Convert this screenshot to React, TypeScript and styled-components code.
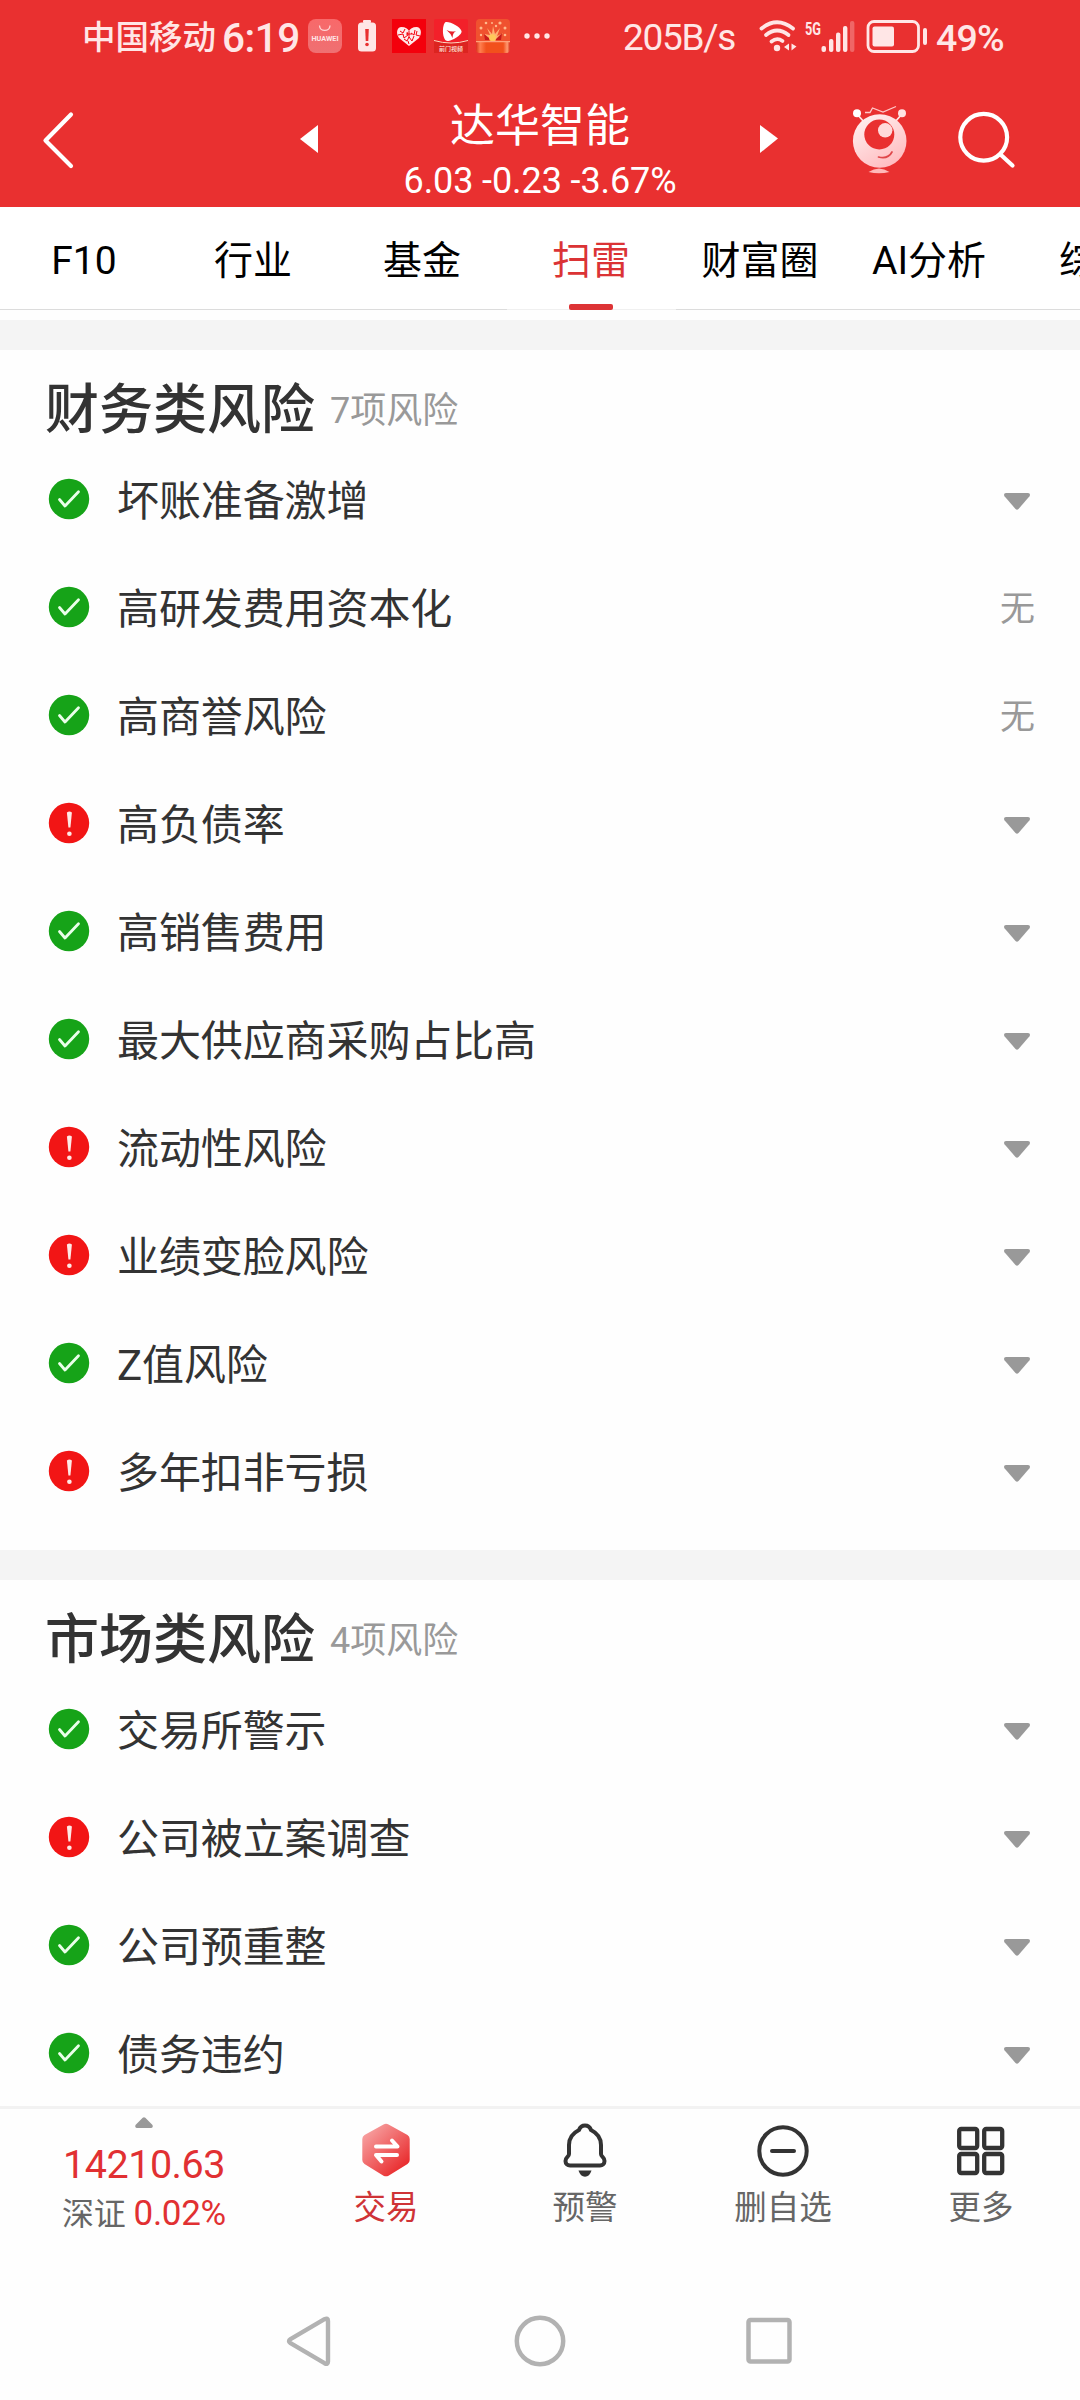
import React from 'react';
import styled, { createGlobalStyle } from 'styled-components';

const GlobalStyle = createGlobalStyle`
  * { box-sizing: border-box; }
  body {
    margin: 0;
    background: #fff;
    font-family: Roboto, "Noto Sans CJK SC", sans-serif;
    color: #333;
  }
  svg { display: block; flex: none; overflow: visible; }
`;

const Screen = styled.div`
  width: 1080px;
  height: 2400px;
  display: flex;
  flex-direction: column;
  overflow: hidden;
  background: #fefefe;
`;

/* ---------- status bar ---------- */

const StatusBar = styled.div`
  flex: none;
  height: 75px;
  padding: 0 0 3px 82px;
  display: flex;
  align-items: center;
  background: #e93030;
  color: #ffe6e6;
  white-space: nowrap;
`;

const StatusText = styled.span<{ $w: number; $size: number; $weight?: number; $gap?: number; $track?: number }>`
  flex: none;
  width: ${p => p.$w}px;
  margin-left: ${p => p.$gap ?? 0}px;
  padding-top: 3px;
  font-size: ${p => p.$size}px;
  font-weight: ${p => p.$weight ?? 400};
  letter-spacing: ${p => p.$track ?? 0}px;
  line-height: 50px;
`;

const StatusIcon = styled.span<{ $gap: number }>`
  flex: none;
  margin-left: ${p => p.$gap}px;
`;

/* ---------- title bar ---------- */

const TitleBar = styled.header`
  flex: none;
  height: 132px;
  padding-left: 41px;
  display: flex;
  align-items: center;
  background: #e93030;
  color: #fff;
`;

const IconSlot = styled.span<{ $gap?: number; $raise?: number }>`
  flex: none;
  margin-left: ${p => p.$gap ?? 0}px;
  padding-bottom: ${p => p.$raise ?? 0}px;
`;

const Stock = styled.div`
  flex: none;
  width: 442px;
  height: 132px;
  padding: 22px 0 0 2px;
  display: flex;
  flex-direction: column;
  align-items: center;
`;

const StockName = styled.div`
  font-size: 45px;
  line-height: 60px;
`;

const StockQuote = styled.div`
  font-size: 36px;
  line-height: 48px;
  letter-spacing: -0.1px;
  white-space: pre;
`;

/* ---------- tabs ---------- */

const Tabs = styled.nav`
  flex: none;
  height: 103px;
  display: flex;
  overflow: hidden;
  background: #fff;
`;

const Tab = styled.div<{ $active?: boolean }>`
  flex: none;
  width: 169px;
  display: flex;
  flex-direction: column;
  align-items: center;
  justify-content: space-between;
  font-size: 39px;
  line-height: 56px;
  padding: 26px 1px 0 0;
  white-space: nowrap;
  color: ${p => (p.$active ? '#db3335' : '#000')};
  border-bottom: 1px solid ${p => (p.$active ? '#f0f0f0' : '#dcdcdc')};
`;

const Indicator = styled.span`
  width: 44px;
  height: 6px;
  margin-bottom: -1px;
  border-radius: 2px;
  background: #dd3335;
`;

/* ---------- risk list ---------- */

const Content = styled.main`
  flex: none;
  height: 1796px;
  padding-top: 10px;
  overflow: hidden;
`;

const Section = styled.section`
  height: 1230px;
  border-top: 30px solid #f4f4f4;
`;

const SectionHead = styled.div`
  height: 96px;
  padding: 25px 45px 0;
  display: flex;
  align-items: center;
  gap: 15px;
`;

const SectionTitle = styled.h2`
  margin: 0;
  font-size: 54px;
  line-height: 76px;
  font-weight: 500;
`;

const SectionCount = styled.span`
  font-size: 36px;
  line-height: 50px;
  padding-top: 1px;
  color: #999;
`;

const Row = styled.div`
  height: 108px;
  padding: 0 45px 0 48px;
  display: flex;
  align-items: center;
`;

const RowName = styled.span`
  flex: 1;
  margin-left: 27px;
  padding-top: 4px;
  font-size: 42px;
  line-height: 60px;
  letter-spacing: -0.1px;
`;

const RowNone = styled.span`
  font-size: 35px;
  line-height: 50px;
  padding-top: 3px;
  color: #999;
`;

const Toggle = styled.span`
  margin: 3px 5px 0 0;
`;

/* ---------- bottom bar ---------- */

const BottomBar = styled.footer`
  flex: none;
  height: 174px;
  display: flex;
  border-top: 3px solid #f2f2f2;
  background: #fefefe;
`;

const IndexCell = styled.div`
  width: 288px;
  padding-top: 8px;
  display: flex;
  flex-direction: column;
  align-items: center;
  color: #e13032;
`;

const IndexValue = styled.div`
  margin-top: 12px;
  font-size: 39.5px;
  line-height: 50px;
  letter-spacing: -0.5px;
`;

const IndexChange = styled.div`
  font-size: 35px;
  line-height: 48px;
  letter-spacing: -0.3px;
  white-space: nowrap;
`;

const IndexName = styled.span`
  margin-right: 8px;
  font-size: 32px;
  color: #666;
`;

const Action = styled.div<{ $accent?: boolean }>`
  width: 198px;
  padding-top: 12px;
  display: flex;
  flex-direction: column;
  align-items: center;
  gap: 5px;
  font-size: 32.5px;
  line-height: 48px;
  color: ${p => (p.$accent ? '#cf3336' : '#666')};
  ${p => p.$accent && 'padding-right: 2px;'}
`;

const SystemNav = styled.div`
  flex: 1;
  padding: 2px 284px 0 285px;
  display: flex;
  align-items: center;
  justify-content: space-between;
`;

/* ---------- drawings ---------- */

const StoreIcon = () => (
  <svg width="34" height="34" viewBox="0 0 34 34">
    <defs>
      <linearGradient id="store" x1="0" y1="0" x2="0" y2="1">
        <stop offset="0" stopColor="#f8696a" /><stop offset="1" stopColor="#ef7072" />
      </linearGradient>
    </defs>
    <rect width="34" height="34" rx="8" fill="url(#store)" />
    <path d="M11.500 6.500c0 6.500 10.500 6.500 10.500 0" fill="none" stroke="#ffd5d5" strokeWidth="1.300" />
    <text x="17" y="21.800" textAnchor="middle" fontSize="6.500" fontWeight="700" fill="#ffe6e6" textLength="27" lengthAdjust="spacingAndGlyphs">HUAWEI</text>
  </svg>
);

const LowBattery = () => (
  <svg width="18" height="34" viewBox="0 0 18 34">
    <rect x="5" y="1" width="8" height="3" rx="1" fill="#ffe6e6" />
    <rect y="3.500" width="18" height="29" rx="3.500" fill="#ffe6e6" />
    <path d="M7.200 10h3.600l-.5 12H7.700z" fill="#e93030" />
    <circle cx="9" cy="25.500" r="1.800" fill="#e93030" />
  </svg>
);

const HeartApp = () => (
  <svg width="34" height="34" viewBox="0 0 34 34">
    <rect width="34" height="34" fill="#f4000c" />
    <path d="M17 27L7 19C3.500 14 5 8 9.500 8c4 0 6.500 2 7.500 4 1-2 3.500-4 7.500-4C29 8 30.500 14 27 19z" fill="#ffe9e9" />
    <path d="M8 12l3 2 2-4M6 16l5-1 1 4 4-3-1-3M12 20l3 2 2-4 3 4 2-5M19 14l3 2 1-5M25 12l-1 4 4 1M16 22l1 3" fill="none" stroke="#f4000c" strokeWidth="1" />
    <path d="M14 15h6M17 12v7" stroke="#f4000c" strokeWidth="1" />
  </svg>
);

const VideoApp = () => (
  <svg width="34" height="34" viewBox="0 0 34 34">
    <rect width="34" height="34" rx="2" fill="#f3202a" />
    <path d="M0 34V21q17 5 34 0v13z" fill="#dc2420" />
    <path d="M0 21.500q17 5 34 0" fill="none" stroke="#ffd6c0" strokeWidth="1" />
    <path d="M11 3.500c3-2 15 4 16.500 8.500 1 4-10 10-14 10C8.500 22 7.500 8 11 3.500z" fill="#fff" />
    <path d="M12.500 11q5 2.500 9.500 1-3.500 2-3.500 7-1.500-4.500-6-8z" fill="#e5202a" />
    <text x="17" y="31.500" textAnchor="middle" fontSize="6" fontWeight="500" fill="#ffe6dc">前门视频</text>
  </svg>
);

const GiftApp = () => (
  <svg width="34" height="34" viewBox="0 0 34 34">
    <defs>
      <linearGradient id="gift" x1="0" y1="0" x2="1" y2="0">
        <stop offset="0" stopColor="#d9301c" /><stop offset=".12" stopColor="#ff8050" />
        <stop offset=".3" stopColor="#f2501c" /><stop offset=".8" stopColor="#f2501c" />
        <stop offset=".92" stopColor="#ff9a70" /><stop offset="1" stopColor="#d9301c" />
      </linearGradient>
    </defs>
    <rect width="34" height="34" rx="4" fill="#f0522f" />
    <path d="M17 22L8 15l6 1-3-7 5 6 1-8 2 8 5-6-3 8 6-3-8 8z" fill="#ffb070" />
    <path d="M8 15l7 6H9zM26 14l-7 7h6z" fill="#c81c1c" />
    <g fill="#ffb98c">
      <circle cx="5" cy="9" r="1.500" /><circle cx="10" cy="4" r="1.300" /><circle cx="16" cy="4" r="1" /><circle cx="24" cy="4" r="1.600" />
      <circle cx="29" cy="9" r="1.500" /><circle cx="5" cy="16" r="1.200" /><circle cx="29" cy="16" r="1.300" /><circle cx="20" cy="7" r="1.200" />
    </g>
    <circle cx="16.500" cy="18.800" r="3.500" fill="#ffc85a" />
    <path d="M0 22.500h34V30a4 4 0 0 1-4 4H4a4 4 0 0 1-4-4z" fill="url(#gift)" />
    <path d="M0 22h34v1.200H0z" fill="#ffa07a" />
  </svg>
);

const MoreDots = () => (
  <svg width="26" height="6" viewBox="0 0 26 6" fill="#ffe6e6">
    <circle cx="3" cy="3" r="2.700" /><circle cx="13" cy="3" r="2.700" /><circle cx="23" cy="3" r="2.700" />
  </svg>
);

const Wifi = () => (
  <svg width="39" height="34" viewBox="0 0 39 34" fill="none" stroke="#ffe6e6" strokeWidth="3.800" strokeLinecap="round">
    <path d="M2.500 9.500Q18 -3 34 9.500" />
    <path d="M7 16Q18 7 29.500 16" />
    <path d="M12.500 22.500Q18 18 23.500 22" />
    <circle cx="18" cy="29" r="3.200" fill="#ffe6e6" stroke="none" />
    <path d="M30 24.500v7l-5-3.500zM32.500 24.500v7l5-4z" fill="#ffe6e6" stroke="none" />
  </svg>
);

const Signal = () => (
  <svg width="50" height="34" viewBox="0 0 50 34" fill="#ffe6e6">
    <text x="0" y="15.500" fontSize="19" fontWeight="700" textLength="16" lengthAdjust="spacingAndGlyphs">5G</text>
    <rect x="16.500" y="27" width="4.500" height="6" rx="2" />
    <rect x="24" y="20" width="4.400" height="13" rx="2" />
    <rect x="31" y="13.500" width="4.400" height="19.500" rx="2" />
    <rect x="38" y="7" width="4.400" height="26" rx="2" />
    <rect x="45" y="2" width="4.400" height="31" rx="2" opacity=".3" />
  </svg>
);

const Battery = () => (
  <svg width="62" height="34" viewBox="0 0 62 34">
    <rect x="2" y="2.500" width="50.500" height="30" rx="6" fill="none" stroke="#ffe6e6" strokeWidth="2.800" />
    <rect x="6.500" y="7.500" width="21.500" height="20" rx="2" fill="#ffe6e6" />
    <rect x="57" y="9" width="4" height="17" rx="2" fill="#ffe6e6" />
  </svg>
);

const BackIcon = () => (
  <svg width="34" height="60" viewBox="0 0 34 60">
    <path d="M30 4.500L4.500 30.500L30 56" fill="none" stroke="#fff" strokeWidth="4.200" strokeLinecap="round" strokeLinejoin="round" />
  </svg>
);

const Triangle = ({ flip }: { flip?: boolean }) => (
  <svg width="18" height="28" viewBox="0 0 18 28">
    <path d={flip ? 'M0 0L18 13.500L0 28z' : 'M18 0L0 14L18 28z'} fill="#fff" />
  </svg>
);

const RobotIcon = () => (
  <svg width="56" height="70" viewBox="0 0 56 70">
    <defs>
      <linearGradient id="ball" x1="0.200" y1="0" x2="0.800" y2="1">
        <stop offset="0" stopColor="#fff0f0" /><stop offset="1" stopColor="#ffb9bd" />
      </linearGradient>
    </defs>
    <path d="M5 8l7 8M50 8l-7 8" stroke="#ffe3e3" strokeWidth="1.800" />
    <circle cx="5" cy="7.200" r="4" fill="#fff" /><circle cx="50" cy="7.200" r="4" fill="#ffe3e3" />
    <path d="M13 6.500h5l2.500-4.500L31 6l13-5.500" fill="none" stroke="#ffc9c9" strokeWidth="1.300" />
    <circle cx="27.700" cy="35" r="26.800" fill="url(#ball)" />
    <circle cx="27.300" cy="28.500" r="15" fill="#e93030" />
    <circle cx="33.200" cy="24.300" r="7.200" fill="#ffd9da" />
    <path d="M26.500 51q9.500 2.500 13.500-5" fill="none" stroke="#e0474a" strokeWidth="1.700" strokeLinecap="round" />
    <path d="M16.500 66q10.500-7 21 0-10.500 2.500-21 0z" fill="#ffb9b9" />
  </svg>
);

const SearchIcon = () => (
  <svg width="60" height="60" viewBox="0 0 60 60" fill="none" stroke="#fff" strokeWidth="4.200" strokeLinecap="round">
    <circle cx="27.700" cy="26.300" r="23.400" /><path d="M44.500 43.500L56.500 54.500" />
  </svg>
);

const SafeMark = () => (
  <svg width="42" height="42" viewBox="0 0 42 42">
    <circle cx="21" cy="20" r="20.200" fill="#16a318" />
    <path d="M11.500 20.500l5.500 6.500L30.500 12.800" fill="none" stroke="#eaffea" strokeWidth="2.800" strokeLinecap="round" strokeLinejoin="round" />
  </svg>
);

const RiskMark = () => (
  <svg width="42" height="42" viewBox="0 0 42 42">
    <circle cx="21" cy="20" r="20.200" fill="#f21515" />
    <path d="M18.900 9.500q2.500-2.200 5 0l-1.500 15h-2z" fill="#ffe9e6" />
    <circle cx="21.400" cy="30.800" r="2.300" fill="#ffe9e6" />
  </svg>
);

const Caret = () => (
  <svg width="26" height="17" viewBox="0 0 26 17">
    <path d="M2 0h22q3 .6 1.500 3.200L14.500 16q-1.500 1.600-3 0L.5 3.200Q-1 .6 2 0z" fill="#999" />
  </svg>
);

const UpCaret = () => (
  <svg width="18" height="11" viewBox="0 0 18 11">
    <path d="M7.700.8q1.300-1.300 2.600 0L17.500 8q1 2.500-1.500 3H2Q-.5 10.500.5 8z" fill="#999" />
  </svg>
);

const TradeIcon = () => (
  <svg width="54" height="58" viewBox="0 0 54 58">
    <defs>
      <linearGradient id="hex" x1="0.100" y1="0.100" x2="0.800" y2="0.900">
        <stop offset="0" stopColor="#f7a2a2" /><stop offset="1" stopColor="#e92c2e" />
      </linearGradient>
    </defs>
    <path d="M24.500 3.500q2.500-1.300 5 0l19 10.500q2.200 1.300 2.200 4v21q0 2.700-2.200 4l-19 11.700q-2.500 1.300-5 0L5.500 43q-2.200-1.300-2.200-4V18q0-2.700 2.200-4z" fill="url(#hex)" />
    <path d="M17 25.500h21.500L33 19.500M38 34H17l5.500 6.500" fill="none" stroke="#fff" strokeWidth="4" strokeLinecap="round" strokeLinejoin="round" />
  </svg>
);

const BellIcon = () => (
  <svg width="54" height="58" viewBox="0 0 54 58">
    <path d="M27 4.500c-3 0-5 1.700-6 4.500C15 12 11 17 11 24v9c0 3-3.500 3-3.500 7 0 3 2 4.500 4.500 4.500h30c2.500 0 4.500-1.500 4.500-4.500 0-4-3.500-4-3.500-7v-9c0-7-4-12-10-15-1-2.800-3-4.500-6-4.500z" fill="none" stroke="#333" strokeWidth="4" strokeLinejoin="round" />
    <path d="M20.500 49.500h13q-2 6.200-6.500 6.200t-6.500-6.200z" fill="#333" />
  </svg>
);

const MinusIcon = () => (
  <svg width="54" height="58" viewBox="0 0 54 58" fill="none" stroke="#333" strokeWidth="4" strokeLinecap="round">
    <circle cx="27" cy="30" r="23.700" /><path d="M16 30h22" />
  </svg>
);

const GridIcon = () => (
  <svg width="54" height="58" viewBox="0 0 54 58" fill="none" stroke="#333" strokeWidth="4.300">
    <rect x="5.200" y="8" width="18" height="19" rx="2" /><rect x="30.200" y="8" width="18" height="19" rx="2" />
    <rect x="5.200" y="33" width="18" height="19" rx="2" /><rect x="30.200" y="33" width="18" height="19" rx="2" />
  </svg>
);

const NavBack = () => (
  <svg width="48" height="54" viewBox="0 0 48 54">
    <path d="M39.500 5.200Q43 3.500 43 7v40.500q0 3.500-3.500 1.700L5.500 29.200q-3-2 0-4z" fill="none" stroke="#b2b2b2" strokeWidth="4.400" strokeLinejoin="round" />
  </svg>
);

const NavHome = () => (
  <svg width="54" height="54" viewBox="0 0 54 54">
    <circle cx="27" cy="27" r="23.200" fill="none" stroke="#b2b2b2" strokeWidth="4.500" />
  </svg>
);

const NavRecent = () => (
  <svg width="50" height="54" viewBox="0 0 50 54">
    <rect x="2.500" y="6" width="41" height="41.500" rx="2" fill="none" stroke="#b2b2b2" strokeWidth="4.500" />
  </svg>
);

/* ---------- data ---------- */

type Status = 'safe' | 'risk';
type Risk = { name: string; status: Status; none?: boolean };

const sections: { title: string; count: string; items: Risk[] }[] = [
  {
    title: '财务类风险',
    count: '7项风险',
    items: [
      { name: '坏账准备激增', status: 'safe' },
      { name: '高研发费用资本化', status: 'safe', none: true },
      { name: '高商誉风险', status: 'safe', none: true },
      { name: '高负债率', status: 'risk' },
      { name: '高销售费用', status: 'safe' },
      { name: '最大供应商采购占比高', status: 'safe' },
      { name: '流动性风险', status: 'risk' },
      { name: '业绩变脸风险', status: 'risk' },
      { name: 'Z值风险', status: 'safe' },
      { name: '多年扣非亏损', status: 'risk' },
    ],
  },
  {
    title: '市场类风险',
    count: '4项风险',
    items: [
      { name: '交易所警示', status: 'safe' },
      { name: '公司被立案调查', status: 'risk' },
      { name: '公司预重整', status: 'safe' },
      { name: '债务违约', status: 'safe' },
    ],
  },
];

const tabs = ['F10', '行业', '基金', '扫雷', '财富圈', 'AI分析', '综合'];

export default function App() {
  return (
    <Screen>
      <GlobalStyle />
      <StatusBar>
        <StatusText $w={135} $size={33.5} $weight={500}>中国移动</StatusText>
        <StatusText $w={76} $size={40.5} $gap={5} $weight={500} $track={-0.5}>6:19</StatusText>
        <StatusIcon $gap={10}><StoreIcon /></StatusIcon>
        <StatusIcon $gap={16}><LowBattery /></StatusIcon>
        <StatusIcon $gap={16}><HeartApp /></StatusIcon>
        <StatusIcon $gap={8}><VideoApp /></StatusIcon>
        <StatusIcon $gap={8}><GiftApp /></StatusIcon>
        <StatusIcon $gap={14}><MoreDots /></StatusIcon>
        <StatusText $w={112} $size={37} $gap={73} $track={-1.3}>205B/s</StatusText>
        <StatusIcon $gap={24}><Wifi /></StatusIcon>
        <StatusIcon $gap={7}><Signal /></StatusIcon>
        <StatusIcon $gap={11}><Battery /></StatusIcon>
        <StatusText $w={72} $size={37.5} $gap={8} $weight={500} $track={-0.8}>49%</StatusText>
      </StatusBar>
      <TitleBar>
        <IconSlot $raise={3}><BackIcon /></IconSlot>
        <IconSlot $gap={225} $raise={4}><Triangle /></IconSlot>
        <Stock>
          <StockName>达华智能</StockName>
          <StockQuote>6.03 -0.23 -3.67%</StockQuote>
        </Stock>
        <IconSlot $raise={4}><Triangle flip /></IconSlot>
        <IconSlot $gap={74}><RobotIcon /></IconSlot>
        <IconSlot $gap={48}><SearchIcon /></IconSlot>
      </TitleBar>
      <Tabs>
        {tabs.map(t => (
          <Tab key={t} $active={t === '扫雷'}>
            {t}
            {t === '扫雷' && <Indicator />}
          </Tab>
        ))}
      </Tabs>
      <Content>
        {sections.map(s => (
          <Section key={s.title}>
            <SectionHead>
              <SectionTitle>{s.title}</SectionTitle>
              <SectionCount>{s.count}</SectionCount>
            </SectionHead>
            {s.items.map(r => (
              <Row key={r.name}>
                {r.status === 'safe' ? <SafeMark /> : <RiskMark />}
                <RowName>{r.name}</RowName>
                {r.none ? <RowNone>无</RowNone> : <Toggle><Caret /></Toggle>}
              </Row>
            ))}
          </Section>
        ))}
      </Content>
      <BottomBar>
        <IndexCell>
          <UpCaret />
          <IndexValue>14210.63</IndexValue>
          <IndexChange><IndexName>深证</IndexName>0.02%</IndexChange>
        </IndexCell>
        <Action $accent><TradeIcon />交易</Action>
        <Action><BellIcon />预警</Action>
        <Action><MinusIcon />删自选</Action>
        <Action><GridIcon />更多</Action>
      </BottomBar>
      <SystemNav>
        <NavBack />
        <NavHome />
        <NavRecent />
      </SystemNav>
    </Screen>
  );
}
